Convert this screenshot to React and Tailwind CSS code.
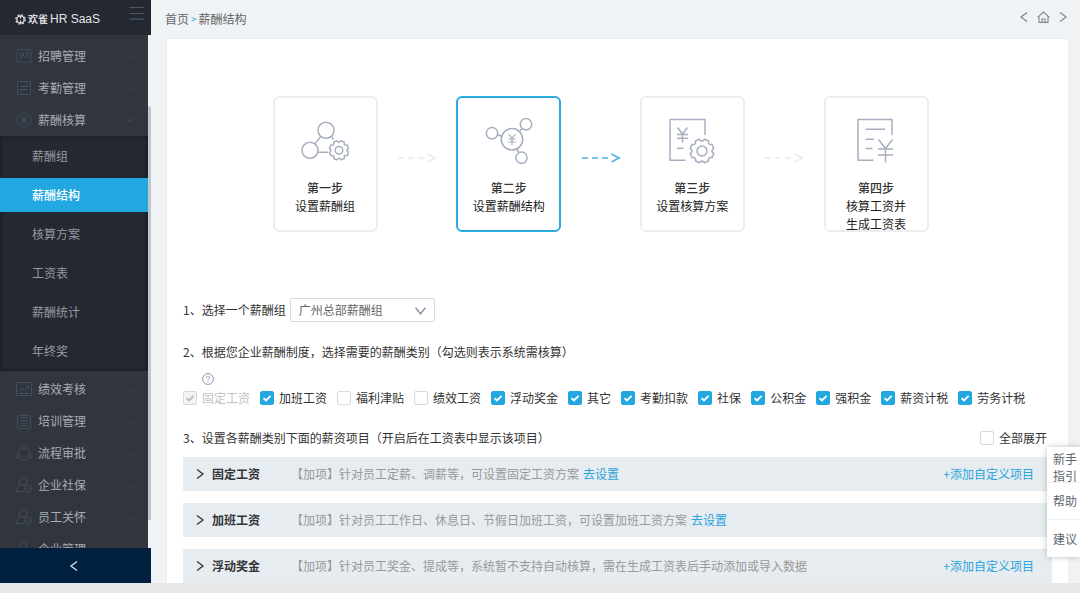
import React from "react";

const FONT = "font-['Noto_Sans_CJK_SC','Noto_Sans',sans-serif]";

function gearPath(cx, cy, outer, inner, teeth) {
  const step = (Math.PI * 2) / teeth;
  const at = (a, r) => `${(cx + r * Math.cos(a)).toFixed(2)} ${(cy + r * Math.sin(a)).toFixed(2)}`;
  let d = "";
  for (let i = 0; i < teeth; i++) {
    const a = i * step + step / 2;
    d += `${i ? "L" : "M"}${at(a - 0.24 * step, outer)}L${at(a + 0.24 * step, outer)}`;
    d += `Q${at(a + 0.5 * step, inner)} ${at(a + 0.76 * step, outer)}`;
  }
  return `${d}Z`;
}

function StepIcon({ children }) {
  return (
    <svg viewBox="0 0 48 48" className="h-12 w-12 shrink-0 text-[#a6aebf]" fill="none" stroke="currentColor" strokeWidth="1.5" strokeLinejoin="round" aria-hidden="true">
      {children}
    </svg>
  );
}

const stepIcons = {
  group: (
    <StepIcon>
      <circle cx="25" cy="14.3" r="8" />
      <circle cx="9" cy="34.3" r="8" />
      <path d="M14 27.6L19.6 20.6M30.5 20.4L32.4 23.6M17 36.3H27" />
      <path d={gearPath(38, 34.3, 9.8, 6.2, 8)} />
      <circle cx="38" cy="34.3" r="3.8" />
    </StepIcon>
  ),
  structure: (
    <StepIcon>
      <circle cx="27" cy="23.3" r="10.7" />
      <circle cx="7" cy="17.3" r="5.7" />
      <circle cx="41" cy="8.3" r="5.7" />
      <circle cx="36.5" cy="41.7" r="5.6" />
      <path d="M12.6 18.8L16.6 20.2M34.4 15.4L37 12.6M31.6 33.2L34 36.6" />
      <path strokeWidth="1.2" d="M23.6 18L27 22.6L30.4 18M27 22.6V29M23.2 23H30.8M23.2 26H30.8" />
    </StepIcon>
  ),
  plan: (
    <StepIcon>
      <path d="M37 19V3.5H2V44.3H17.5" />
      <path d="M9.5 11.5L14.5 18L19.5 11.5M14.5 18V26.5M9 18.5H20M9 22.3H20M9 32.3H15.5" />
      <path d={gearPath(34, 35, 12, 8, 8)} />
      <circle cx="34" cy="35" r="5" />
    </StepIcon>
  ),
  table: (
    <StepIcon>
      <path d="M40 19V3.5H6V44.3H21.5" />
      <path d="M13.5 13.3H33M13.5 23.3H22M13.5 32.5H20.5" />
      <path d="M26.5 23.5L33.5 32.5L40.5 23.5M33.5 32.5V46.5M26 33H41M26 39H41" />
    </StepIcon>
  ),
};

const navIcons = {
  recruit: (
    <>
      <path d="M1 1.5H15V15L12.7 13.2L10.3 15L8 13.2L5.7 15L3.3 13.2L1 15Z" />
      <path d="M4.5 4.5V10.5M4.5 5H7.5V8H4.5M9.5 4.5H12V8H9.5V10.5M12 8V10.5" />
    </>
  ),
  attendance: (
    <>
      <rect x="1.5" y="1.5" width="13" height="13" />
      <path d="M4 6.5H12L9.5 4M12 9.5H4L6.5 12" />
    </>
  ),
  salary: (
    <>
      <circle cx="8" cy="8" r="7" />
      <path d="M5.5 4L8 7.5L10.5 4M8 7.5V12.5M5 8H11M5 10H11" />
    </>
  ),
  performance: (
    <>
      <rect x="0.5" y="1.5" width="15" height="13" />
      <path d="M3 10.5L6 7.5L8.5 9.5L12.5 5M9.5 5H12.5V8M2.5 12.5H13.5" />
    </>
  ),
  training: (
    <>
      <rect x="1.5" y="2.5" width="13" height="13" rx="1.5" />
      <path d="M5 4.5V2H6.5C6.5 0 9.5 0 9.5 2H11V4.5ZM4.5 7.5H11.5M4.5 10H11.5M4.5 12.5H11.5" />
    </>
  ),
  approval: (
    <>
      <circle cx="8" cy="2.5" r="2" />
      <circle cx="2.2" cy="12" r="1.8" />
      <circle cx="13.8" cy="12" r="1.8" />
      <path d="M5.5 3.5C3 4.5 1.5 7 2 9.8M10.5 3.5C13 4.5 14.5 7 14 9.8M4 14C6.5 15.7 9.5 15.7 12 14" />
    </>
  ),
  social: (
    <>
      <circle cx="7" cy="4.5" r="3.8" />
      <path d="M4.5 7.8C2 9 0.5 11 0.5 14.5H8" />
      <circle cx="12" cy="12" r="3.5" />
      <path d="M10.2 12H13.8" />
    </>
  ),
  care: (
    <>
      <circle cx="7" cy="4.5" r="3.8" />
      <path d="M4.5 7.8C2 9 0.5 11 0.5 14.5H8" />
      <circle cx="12" cy="12" r="3.5" />
      <path d="M10.3 12L11.7 13.3L13.9 11" />
    </>
  ),
};

function Chevron({ d, className }) {
  return (
    <svg viewBox="0 0 10 10" className={className} fill="none" stroke="currentColor" strokeWidth="1.3" aria-hidden="true">
      <path d={d} />
    </svg>
  );
}
const UP = "M1 7.5L5 3L9 7.5";
const DOWN = "M0.5 2.5L5 8L9.5 2.5";
const LEFT = "M8 0.5L2 5L8 9.5";
const RIGHT = "M2 0.5L8 5L2 9.5";

function NavItem({ icon, label, open }) {
  return (
    <button type="button" className="flex h-8 w-full shrink-0 items-center gap-[6px] pr-[14px] pl-4 text-left text-[#a9acb1]">
      <svg viewBox="0 0 16 16" className="h-4 w-4 text-[#434d5b]" fill="none" stroke="currentColor" strokeWidth="1" aria-hidden="true">
        {navIcons[icon]}
      </svg>
      <span className="flex-1">{label}</span>
      <Chevron d={open ? UP : DOWN} className={open ? "h-[7px] w-[7px] text-[#4d5969]" : "h-[7px] w-[7px] text-[#3d4652]"} />
    </button>
  );
}

const subItems = ["薪酬组", "薪酬结构", "核算方案", "工资表", "薪酬统计", "年终奖"];

function Sidebar() {
  return (
    <aside className="flex w-[151px] shrink-0 flex-col">
      <header className="flex h-[35px] shrink-0 items-start justify-between bg-[#242831] pr-[6px] pl-[15px] text-white">
        <div className="flex items-center gap-[2px] pt-[11px]">
          <svg viewBox="0 0 12 12" className="h-[11px] w-[11px]" fill="none" stroke="#e8e8ea" aria-hidden="true">
            <circle cx="6" cy="6" r="4" strokeWidth="1.4" />
            <circle cx="6" cy="6" r="5.2" strokeWidth="1.2" strokeDasharray="2.1 2" />
            <path d="M6 2V5M6 7V10" strokeWidth="1.2" />
          </svg>
          <span className="text-[10px] leading-4 font-bold text-[#dcdde0]">欢雀</span>
          <span className="font-['Liberation_Sans',sans-serif] text-[12px] leading-4 text-[#e4e5e8]">HR SaaS</span>
        </div>
        <button type="button" aria-label="菜单" className="pt-[6px]">
          <svg viewBox="0 0 16 14" className="h-[14px] w-4" fill="none" stroke="#4b566b" strokeWidth="1.2" aria-hidden="true">
            <path d="M0.5 1.5H15.5M0.5 7.5H15.5M0.5 13.2H15.5" />
          </svg>
        </button>
      </header>
      <div className="flex min-h-0 flex-1">
        <nav className="flex min-w-0 flex-1 flex-col overflow-hidden bg-[#31353e] pt-[5px]">
          <NavItem icon="recruit" label="招聘管理" />
          <NavItem icon="attendance" label="考勤管理" />
          <NavItem icon="salary" label="薪酬核算" open />
          <ul className="mb-[2px] flex shrink-0 flex-col gap-[5px] bg-[#242831] py-[3px] shadow-[inset_0_0_5px_rgba(0,0,0,0.45)]">
            {subItems.map((t, i) => (
              <li key={t}>
                <a
                  href="#"
                  className={
                    i === 1
                      ? "flex h-[34px] items-center bg-[#22a7e0] pl-8 font-medium text-white"
                      : "flex h-[34px] items-center pl-8 text-[#96999e]"
                  }
                >
                  {t}
                </a>
              </li>
            ))}
          </ul>
          <NavItem icon="performance" label="绩效考核" />
          <NavItem icon="training" label="培训管理" />
          <NavItem icon="approval" label="流程审批" />
          <NavItem icon="social" label="企业社保" />
          <NavItem icon="care" label="员工关怀" />
          <NavItem icon="social" label="企业管理" />
        </nav>
        <div className="w-[3px] pt-[71px] pb-7">
          <div className="h-full rounded-t-sm bg-[#bfc8d0]" />
        </div>
      </div>
      <button type="button" aria-label="收起" className="flex h-[35px] shrink-0 items-center justify-center bg-[#01203f] pr-1 text-[#d5dbe2]">
        <Chevron d={LEFT} className="h-[10px] w-[10px]" />
      </button>
    </aside>
  );
}

const steps = [
  { icon: "group", title: "第一步", lines: ["设置薪酬组"] },
  { icon: "structure", title: "第二步", lines: ["设置薪酬结构"], active: true },
  { icon: "plan", title: "第三步", lines: ["设置核算方案"] },
  { icon: "table", title: "第四步", lines: ["核算工资并", "生成工资表"] },
];

function Arrow({ active }) {
  return (
    <div className={active ? "flex flex-1 justify-center pb-3 text-[#52b0e6]" : "flex flex-1 justify-center pb-3 text-[#e7ecf2]"}>
      <svg viewBox="0 0 40 12" className="h-3 w-10" fill="none" stroke="currentColor" strokeWidth="1.7" aria-hidden="true">
        <path d="M1 6H7M11 6H17M21 6H27M30.5 2L38 6L30.5 10" />
      </svg>
    </div>
  );
}

function Steps() {
  return (
    <div className="mr-[34px] flex justify-center">
      <ol className="flex w-[656px] items-center">
        {steps.map((s, i) => (
          <React.Fragment key={s.title}>
            {i > 0 && (
              <li className="flex flex-1">
                <Arrow active={i === 2} />
              </li>
            )}
            <li
              className={
                s.active
                  ? "flex h-[136px] w-[105px] flex-col items-center rounded-md border-2 border-[#2aabe2] pt-[18px] text-center leading-[18px] text-[#1c1c1c]"
                  : "flex h-[136px] w-[105px] flex-col items-center rounded-md border-2 border-[#eaeef2] pt-[18px] text-center leading-[18px] text-[#1c1c1c]"
              }
            >
              {stepIcons[s.icon]}
              <strong className="mt-[15px] font-medium text-[#333]">{s.title}</strong>
              {s.lines.map((l) => (
                <span key={l} className="whitespace-nowrap">{l}</span>
              ))}
            </li>
          </React.Fragment>
        ))}
      </ol>
    </div>
  );
}

function Check({ label, checked = false, disabled = false }) {
  return (
    <label className={disabled ? "flex items-center gap-[5px] text-[#c3c3c3]" : "flex items-center gap-[5px] text-[#333]"}>
      <span className="relative flex h-[14px] w-[14px]">
        <input
          type="checkbox"
          defaultChecked={checked}
          disabled={disabled}
          className="peer h-[14px] w-[14px] appearance-none rounded-[2px] border border-[#d4dae2] bg-white checked:border-[#22a7e0] checked:bg-[#22a7e0] disabled:border-[#d4dae2] disabled:bg-[#f3f4f5]"
        />
        <svg
          viewBox="0 0 14 14"
          className="pointer-events-none absolute inset-0 hidden h-[14px] w-[14px] text-white peer-checked:block peer-disabled:text-[#b9bdc2]"
          fill="none"
          stroke="currentColor"
          strokeWidth="1.9"
          aria-hidden="true"
        >
          <path d="M3.6 7.2L6 9.4L10.6 4.8" />
        </svg>
      </span>
      <span className="whitespace-nowrap">{label}</span>
    </label>
  );
}

const categories = [
  ["固定工资", true, true],
  ["加班工资", true],
  ["福利津贴", false],
  ["绩效工资", false],
  ["浮动奖金", true],
  ["其它", true],
  ["考勤扣款", true],
  ["社保", true],
  ["公积金", true],
  ["强积金", true],
  ["薪资计税", true],
  ["劳务计税", true],
];

const rows = [
  { title: "固定工资", desc: "【加项】针对员工定薪、调薪等，可设置固定工资方案", link: true, add: true },
  { title: "加班工资", desc: "【加项】针对员工工作日、休息日、节假日加班工资，可设置加班工资方案", link: true },
  { title: "浮动奖金", desc: "【加项】针对员工奖金、提成等，系统暂不支持自动核算，需在生成工资表后手动添加或导入数据", add: true },
];

export default function App() {
  return (
    <div className={`relative flex h-screen flex-col overflow-hidden bg-[#eff3f6] text-[12px] leading-[18px] ${FONT}`}>
      <div className="flex min-h-0 flex-1">
        <Sidebar />
        <main className="flex min-w-0 flex-1 flex-col">
          <div className="flex h-[38px] shrink-0 items-center justify-between pr-3 pl-[14px] text-[#666]">
            <nav className="flex items-center gap-[2px]">
              <a href="#">首页</a>
              <span className="text-[10px] text-[#3aa9de]">&gt;</span>
              <span>薪酬结构</span>
            </nav>
            <div className="mb-1 flex items-center gap-2 text-[#888]">
              <button type="button" aria-label="后退">
                <Chevron d={LEFT} className="h-[10px] w-[10px]" />
              </button>
              <button type="button" aria-label="主页">
                <svg viewBox="0 0 13 12" className="h-3 w-[13px]" fill="none" stroke="currentColor" strokeWidth="1.1" aria-hidden="true">
                  <path d="M0.6 6.4L6.5 1L12.4 6.4M2 5.4V11.4H11V5.4M5 11V8H8V11" />
                </svg>
              </button>
              <button type="button" aria-label="前进">
                <Chevron d={RIGHT} className="h-[10px] w-[10px]" />
              </button>
            </div>
          </div>

          <section className="mr-[11px] ml-[15px] flex min-h-0 flex-1 flex-col overflow-hidden rounded-t-[3px] border border-b-0 border-[#eceff2] bg-white px-4 pt-[57px] text-[#333]">
            <Steps />

            <div className="mt-[66px] flex items-center gap-1">
              <label htmlFor="group">1、选择一个薪酬组</label>
              <div className="relative h-6 w-[145px]">
                <select id="group" className="h-6 w-full appearance-none rounded-[2px] border border-[#d5dbe5] bg-white pl-2 text-[12px] text-[#666]">
                  <option>广州总部薪酬组</option>
                </select>
                <Chevron d={DOWN} className="pointer-events-none absolute top-[7px] right-[9px] h-[11px] w-[11px] text-[#8a95a5]" />
              </div>
            </div>

            <p className="mt-[21px]">2、根据您企业薪酬制度，选择需要的薪酬类别（勾选则表示系统需核算）</p>

            <button type="button" aria-label="说明" className="mt-3 ml-[19px] self-start text-[#7f8aa3]">
              <svg viewBox="0 0 12 12" className="h-3 w-3" fill="none" stroke="currentColor" strokeWidth="0.9" aria-hidden="true">
                <circle cx="6" cy="6" r="5.4" />
                <path d="M4.4 4.8C4.4 2.6 7.6 2.7 7.6 4.6C7.6 5.8 6 5.8 6 7.2M6 8.2V9.2" />
              </svg>
            </button>

            <div className="mt-1 flex gap-[10px]">
              {categories.map(([label, checked, disabled]) => (
                <Check key={label} label={label} checked={checked} disabled={disabled} />
              ))}
            </div>

            <div className="mt-[22px] flex items-center justify-between pr-[5px]">
              <p>3、设置各薪酬类别下面的薪资项目（开启后在工资表中显示该项目）</p>
              <Check label="全部展开" />
            </div>

            <ul className="mt-[10px] flex flex-col gap-3">
              {rows.map((r) => (
                <li key={r.title} className="flex h-[34px] shrink-0 items-center bg-[#e7ecf0] pr-[18px] pl-3">
                  <button type="button" className="flex w-24 items-center gap-[7px] font-bold text-[#333]">
                    <Chevron d={RIGHT} className="h-[10px] w-[10px]" />
                    {r.title}
                  </button>
                  <span className="whitespace-nowrap text-[#999]">{r.desc}</span>
                  {r.link && (
                    <a href="#" className="ml-1 whitespace-nowrap text-[#2ba4dc]">去设置</a>
                  )}
                  {r.add && (
                    <button type="button" className="ml-auto whitespace-nowrap text-[#2ba4dc]">+添加自定义项目</button>
                  )}
                </li>
              ))}
            </ul>
          </section>
        </main>
      </div>
      <footer className="h-[10px] shrink-0 bg-[#e8e8e8]" />

      <div className="absolute right-0 bottom-9 flex w-[33px] flex-col divide-y divide-[#eef0f3] bg-white text-[#5d6470] shadow-[0_0_6px_rgba(0,0,0,0.25)]">
        <button type="button" className="h-9 pt-[3px] pl-[6px] text-left leading-[17px]">新手指引</button>
        <button type="button" className="h-[37px] pl-[6px] text-left">帮助</button>
        <button type="button" className="h-[37px] pl-[6px] text-left">建议</button>
      </div>
    </div>
  );
}
